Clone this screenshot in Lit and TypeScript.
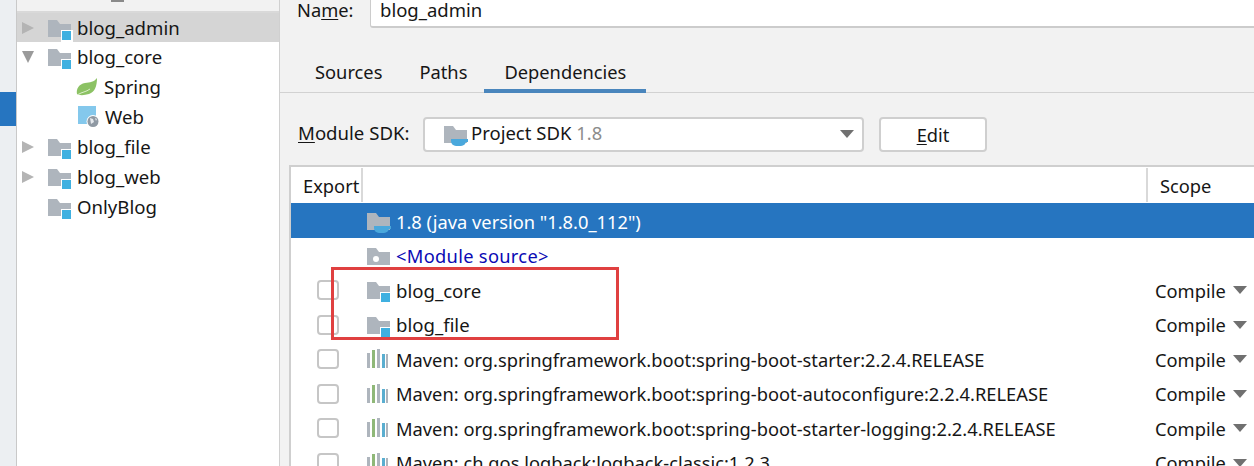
import { LitElement, html, css, svg } from "lit";
import { customElement } from "lit/decorators.js";

const folder = (badge: string) => html`<svg class="ico f" width="26" height="26" viewBox="0 0 26 26">
  <path d="M1 3h9l3 4h11v13H1z" fill="#aeb5bd"/>
  ${badge === "sq" ? svg`<rect x="14" y="13" width="12" height="12" fill="#fff"/><rect x="15" y="14" width="9" height="9" fill="#3fb0e0"/>` : ""}
  ${badge === "dot" ? svg`<circle cx="10" cy="14" r="3" fill="#fff"/>` : ""}
  ${badge === "cup" ? svg`<path d="M8 16h15v2a5 5 0 0 1-5 5h-5a5 5 0 0 1-5-5z" fill="#4aa8dc"/><path d="M22 16h3v3h-3z" fill="#4aa8dc"/>` : ""}
</svg>`;

const maven = html`<svg class="ico" width="24" height="20" viewBox="0 0 24 20">
  <rect x="1" y="5" width="3" height="15" fill="#aeb5bd"/>
  <rect x="6" y="2" width="3" height="18" fill="#8fb878"/>
  <rect x="11" y="1" width="3" height="19" fill="#aeb5bd"/>
  <rect x="16" y="6" width="3" height="14" fill="#5aaed0"/>
  <rect x="20" y="6" width="2" height="14" fill="#aeb5bd"/>
</svg>`;

const leaf = html`<svg class="ico leaf" width="22" height="18" viewBox="0 0 22 18">
  <path d="M21 0C21 8 19 14 13 16 8 17.500 3 17.500 1 16 0 11 3 6 9 5 14 4.500 18 4 21 0z" fill="#8cc264"/>
  <path d="M2 16.500C6 14 10 14 14 11" stroke="#dcefcb" stroke-width="1" fill="none"/>
</svg>`;

const web = html`<svg class="ico web" width="26" height="26" viewBox="0 0 26 26">
  <path d="M1 2h18v18H1z" fill="#84c8ec"/>
  <circle cx="16" cy="17.500" r="6.500" fill="#fff"/>
  <circle cx="16" cy="17.500" r="5.500" fill="#8f99a3"/>
  <path d="M13 14l3 1 1 3-3 2zM18 14l2 1-1 2z" fill="#e4e8ec"/>
</svg>`;

type TreeItem = { label: string; arrow?: "r" | "d"; child?: boolean; icon?: any; sel?: boolean };
const tree: TreeItem[] = [
  { label: "blog_admin", arrow: "r", sel: true },
  { label: "blog_core", arrow: "d" },
  { label: "Spring", child: true, icon: leaf },
  { label: "Web", child: true, icon: web },
  { label: "blog_file", arrow: "r" },
  { label: "blog_web", arrow: "r" },
  { label: "OnlyBlog" },
];

type Row = { label: any; icon: any; check?: boolean; scope?: boolean; cls?: string };
const rows: Row[] = [
  { label: `1.8 (java version "1.8.0_112")`, icon: folder("cup"), cls: "active" },
  { label: "<Module source>", icon: folder("dot"), cls: "src" },
  { label: "blog_core", icon: folder("sq"), check: true, scope: true, cls: "mod" },
  { label: "blog_file", icon: folder("sq"), check: true, scope: true, cls: "mod" },
  { label: "Maven: org.springframework.boot:spring-boot-starter:2.2.4.RELEASE", icon: maven, check: true, scope: true },
  { label: "Maven: org.springframework.boot:spring-boot-autoconfigure:2.2.4.RELEASE", icon: maven, check: true, scope: true },
  { label: "Maven: org.springframework.boot:spring-boot-starter-logging:2.2.4.RELEASE", icon: maven, check: true, scope: true },
  { label: "Maven: ch.qos.logback:logback-classic:1.2.3", icon: maven, check: true, scope: true },
];

@customElement("app-root")
export class AppRoot extends LitElement {
  static styles = css`
    :host { display: block; width: 1254px; height: 466px; overflow: hidden; background: #f2f2f2;
      font-family: "Noto Sans", "Open Sans", sans-serif; font-size: 18.300px; color: #161616; }
    * { box-sizing: border-box; }
    .app { display: flex; height: 466px; }
    .rail { width: 17px; flex: none; background: #eceff2; border-right: 1px solid #c9c9c9; padding-top: 92px; }
    .rail i { display: block; height: 34px; width: 16px; background: #2675c0; }
    .side { width: 263px; flex: none; background: #fff; border-right: 1px solid #d0d0d0; font-size: 18.600px; }
    .side-top { height: 13px; background: #f2f2f2; border-bottom: 2px solid #d9d9d9; padding-left: 94px; }
    .side-top i { display: block; width: 13px; height: 2px; background: #8a8a8a; }
    .t-row { display: flex; align-items: center; height: 30px; padding-left: 4px; white-space: nowrap; }
    .t-row.first { height: 29px; }
    .t-row.sel { background: #d5d5d5; }
    .arrow { width: 26px; flex: none; display: flex; }
    .label { margin-left: 4px; line-height: 30px; }
    .t-row .ico { flex: none; }
    .t-row .ico.f { margin-top: 4px; }
    .t-row.child { padding-left: 59px; }
    .t-row.child .label { margin-left: 6px; }
    .t-row.child .ico.web { margin-left: 1px; }
    .t-row.child .ico.web + .label { margin-left: 2px; }
    .main { flex: 1; min-width: 0; display: flex; flex-direction: column; }
    .name { display: flex; height: 28px; padding-left: 17px; }
    .name span.l { width: 73px; line-height: 20px; }
    u { text-decoration-thickness: 1px; text-underline-offset: 2px; }
    .input { flex: 1; background: #fff; border-left: 1px solid #ccc; border-bottom: 2px solid #ccc;
      border-radius: 0 0 0 3px; padding-left: 9px; line-height: 20px; font-size: 18.500px; }
    .tabs { display: flex; height: 65px; padding: 29px 0 0 16.500px; border-bottom: 1px solid #d2d2d2; }
    .tab { padding: 0 18.500px; height: 36px; line-height: 30px; }
    .tab.on { border-bottom: 4px solid #4a86bd; margin-left: -2px; padding-left: 20.500px; padding-right: 20px; }
    .sdk { display: flex; align-items: center; height: 34px; margin-top: 24px; padding-left: 18px; }
    .sdk .l { width: 125px; font-size: 18.600px; padding-bottom: 3px; }
    .combo { width: 441px; height: 35px; background: #fff; border: 2px solid #cfcfcf; border-radius: 4px;
      display: flex; align-items: center; padding: 0 8px 0 18px; }
    .combo .ico.f { margin-top: 4px; }
    .combo .t { margin-left: 2px; padding-bottom: 3px; font-size: 18.500px; }
    .combo .g { color: #8c8c8c; margin-left: 5px; padding-bottom: 3px; }
    .combo .caret { margin-left: auto; }
    .caret { width: 0; height: 0; border-left: 7px solid transparent; border-right: 7px solid transparent; border-top: 8px solid #707070; flex: none; }
    .btn { width: 108px; height: 35px; margin-left: 15px; background: #fff; border: 2px solid #cfcfcf; border-radius: 4px;
      display: flex; align-items: center; justify-content: center; }
    .table { margin: 14px 0 0 9px; border: 2px solid #cfcfcf; border-right: 0; border-bottom: 0; background: #fff; flex: 1; overflow: hidden; }
    .head { display: flex; height: 36px; align-items: center; padding: 1px 0 1px 12px; }
    .head .e { width: 60px; height: 100%; line-height: 36px; border-right: 2px solid #d9d9d9; }
    .head .s { margin-left: auto; width: 108px; height: 100%; line-height: 36px; padding-left: 12px; border-left: 2px solid #d9d9d9; }
    .row { display: flex; align-items: center; height: 34.500px; white-space: nowrap; position: relative; }
    .row .chk { width: 22px; height: 20px; flex: none; margin: 2px 0 0 26px; border: 2px solid #c6c6c6; border-radius: 4px; background: #fff; }
    .row .nochk { width: 22px; flex: none; margin-left: 26px; }
    .row .ico { flex: none; margin-left: 27px; }
    .row .ico.f { margin-top: 6px; }
    .row .txt { margin-left: 4px; flex: 1; padding-top: 2px; }
    .row.maven .txt { margin-left: 6px; }
    .row.mod .txt { font-size: 18.600px; }
    .row.active { background: #2675c0; color: #fff; }
    .row.src { color: #0a0ab4; }
    .row.src .txt { letter-spacing: 0.300px; }
    .scope { width: 99px; flex: none; display: flex; align-items: center; gap: 7px; padding-top: 2px; }
    .overlay { position: absolute; left: 331px; top: 267px; width: 288px; height: 73px; border: 3px solid #e04040; pointer-events: none; }
  `;

  render() {
    return html`<div class="app">
      <div class="rail"><i></i></div>
      <div class="side">
        <div class="side-top"><i></i></div>
        ${tree.map((t, i) => html`<div class="t-row ${t.sel ? "sel" : ""} ${t.child ? "child" : ""} ${i === 0 ? "first" : ""}">
          ${t.child ? "" : html`<span class="arrow">${t.arrow === "r"
            ? html`<svg width="14" height="14" viewBox="0 0 14 14"><path d="M1 1l12 6-12 6z" fill="#b4b4b4"/></svg>`
            : t.arrow === "d" ? html`<svg width="14" height="14" viewBox="0 0 14 14"><path d="M1 1h12L7 13z" fill="#9a9a9a"/></svg>` : ""}</span>`}
          ${t.icon ?? folder("sq")}
          <span class="label">${t.label}</span>
        </div>`)}
      </div>
      <div class="main">
        <div class="name"><span class="l">Na<u>m</u>e:</span><div class="input">blog_admin</div></div>
        <div class="tabs">
          <div class="tab">Sources</div><div class="tab">Paths</div><div class="tab on">Dependencies</div>
        </div>
        <div class="sdk">
          <span class="l"><u>M</u>odule SDK:</span>
          <div class="combo">${folder("cup")}<span class="t">Project SDK</span><span class="g">1.8</span><span class="caret"></span></div>
          <div class="btn"><span><u>E</u>dit</span></div>
        </div>
        <div class="table">
          <div class="head"><span class="e">Export</span><span class="s">Scope</span></div>
          ${rows.map((r) => html`<div class="row ${r.cls ?? ""} ${r.icon === maven ? "maven" : ""}">
            ${r.check ? html`<span class="chk"></span>` : html`<span class="nochk"></span>`}
            ${r.icon}
            <span class="txt">${r.label}</span>
            ${r.scope ? html`<span class="scope">Compile<span class="caret"></span></span>` : ""}
          </div>`)}
        </div>
      </div>
      <div class="overlay"></div>
    </div>`;
  }
}
